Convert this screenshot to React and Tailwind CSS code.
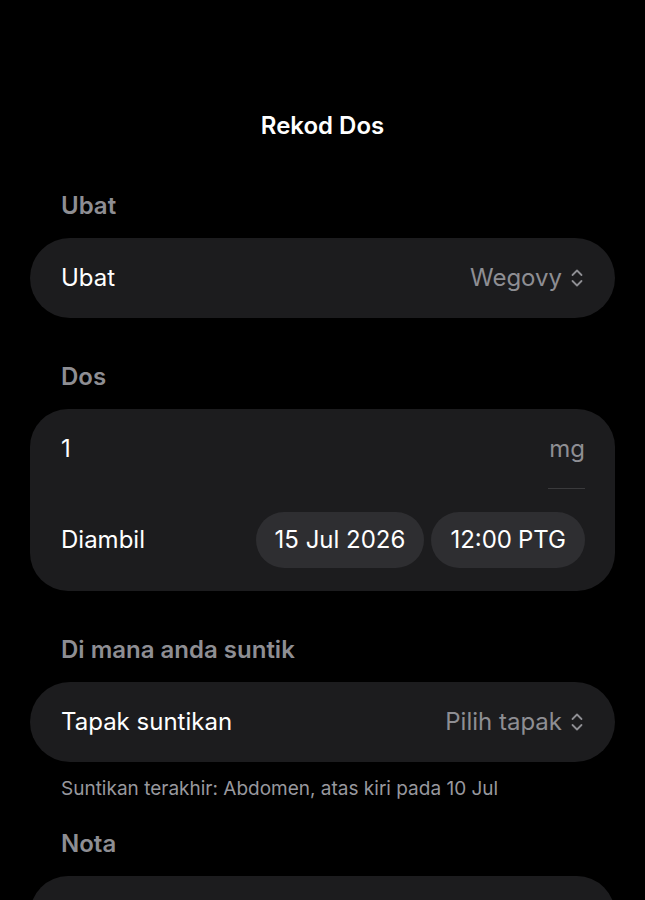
import React from 'react';

const UpDown = () => (
  <svg className="w-[14px] h-[22px] text-[#8e8e93]" viewBox="0 0 14 22" fill="none" stroke="currentColor" strokeWidth="1.8" strokeLinecap="round" strokeLinejoin="round">
    <path d="M2.5 8 L7 3.5 L11.5 8" />
    <path d="M2.5 14 L7 18.5 L11.5 14" />
  </svg>
);

const SectionLabel = ({ children, className = '' }) => (
  <div className={`pl-[31px] mb-[16px] text-[24px] leading-[32px] font-semibold text-[#8e8e93] ${className}`}>
    {children}
  </div>
);

const PickerRow = ({ label, value }) => (
  <div className="h-[80px] rounded-full bg-[#1c1c1e] pl-[31px] pr-[31px] flex items-center justify-between">
    <span className="text-[24px] leading-[32px] text-white">{label}</span>
    <span className="flex items-center gap-[8px] text-[24px] leading-[32px] text-[#8e8e93]">
      {value}
      <UpDown />
    </span>
  </div>
);

const Pill = ({ children }) => (
  <div className="h-[56px] rounded-full bg-[#2e2e31] px-[19px] flex items-center text-[24px] leading-[32px] text-white">
    {children}
  </div>
);

const App = () => {
  return (
    <div className="min-h-screen bg-black px-[30px] pt-[110px] font-['Inter',sans-serif] antialiased">
      {/* Header */}
      <h1 className="text-center text-[24px] leading-[32px] font-semibold text-white">Rekod Dos</h1>

      {/* Medication */}
      <SectionLabel className="mt-[48px]">Ubat</SectionLabel>
      <PickerRow label="Ubat" value="Wegovy" />

      {/* Dose */}
      <SectionLabel className="mt-[43px]">Dos</SectionLabel>
      <div className="rounded-[38px] bg-[#1c1c1e] pl-[31px] pr-[30px] pt-[24px] pb-[23px]">
        <div className="flex items-center justify-between text-[24px] leading-[32px]">
          <span className="text-white">1</span>
          <span className="text-[#8e8e93]">mg</span>
        </div>
        <div className="flex justify-end mt-[23px]">
          <div className="w-[37px] h-px bg-[#3a3a3c]"></div>
        </div>
        <div className="mt-[23px] flex items-center justify-between">
          <span className="text-[24px] leading-[32px] text-white">Diambil</span>
          <div className="flex gap-[7px]">
            <Pill>15 Jul 2026</Pill>
            <Pill>
              <span>12:00</span>
              <span className="ml-[6px]">PTG</span>
            </Pill>
          </div>
        </div>
      </div>

      {/* Injection site */}
      <SectionLabel className="mt-[43px]">Di mana anda suntik</SectionLabel>
      <PickerRow label="Tapak suntikan" value="Pilih tapak" />
      <p className="pl-[31px] mt-[15px] text-[19px] leading-[24px] text-[#98989e]">
        Suntikan terakhir: Abdomen, atas kiri pada 10 Jul
      </p>

      {/* Notes */}
      <SectionLabel className="mt-[27px]">Nota</SectionLabel>
      <div className="h-[120px] rounded-[38px] bg-[#1c1c1e]"></div>
    </div>
  );
};

export default App;
